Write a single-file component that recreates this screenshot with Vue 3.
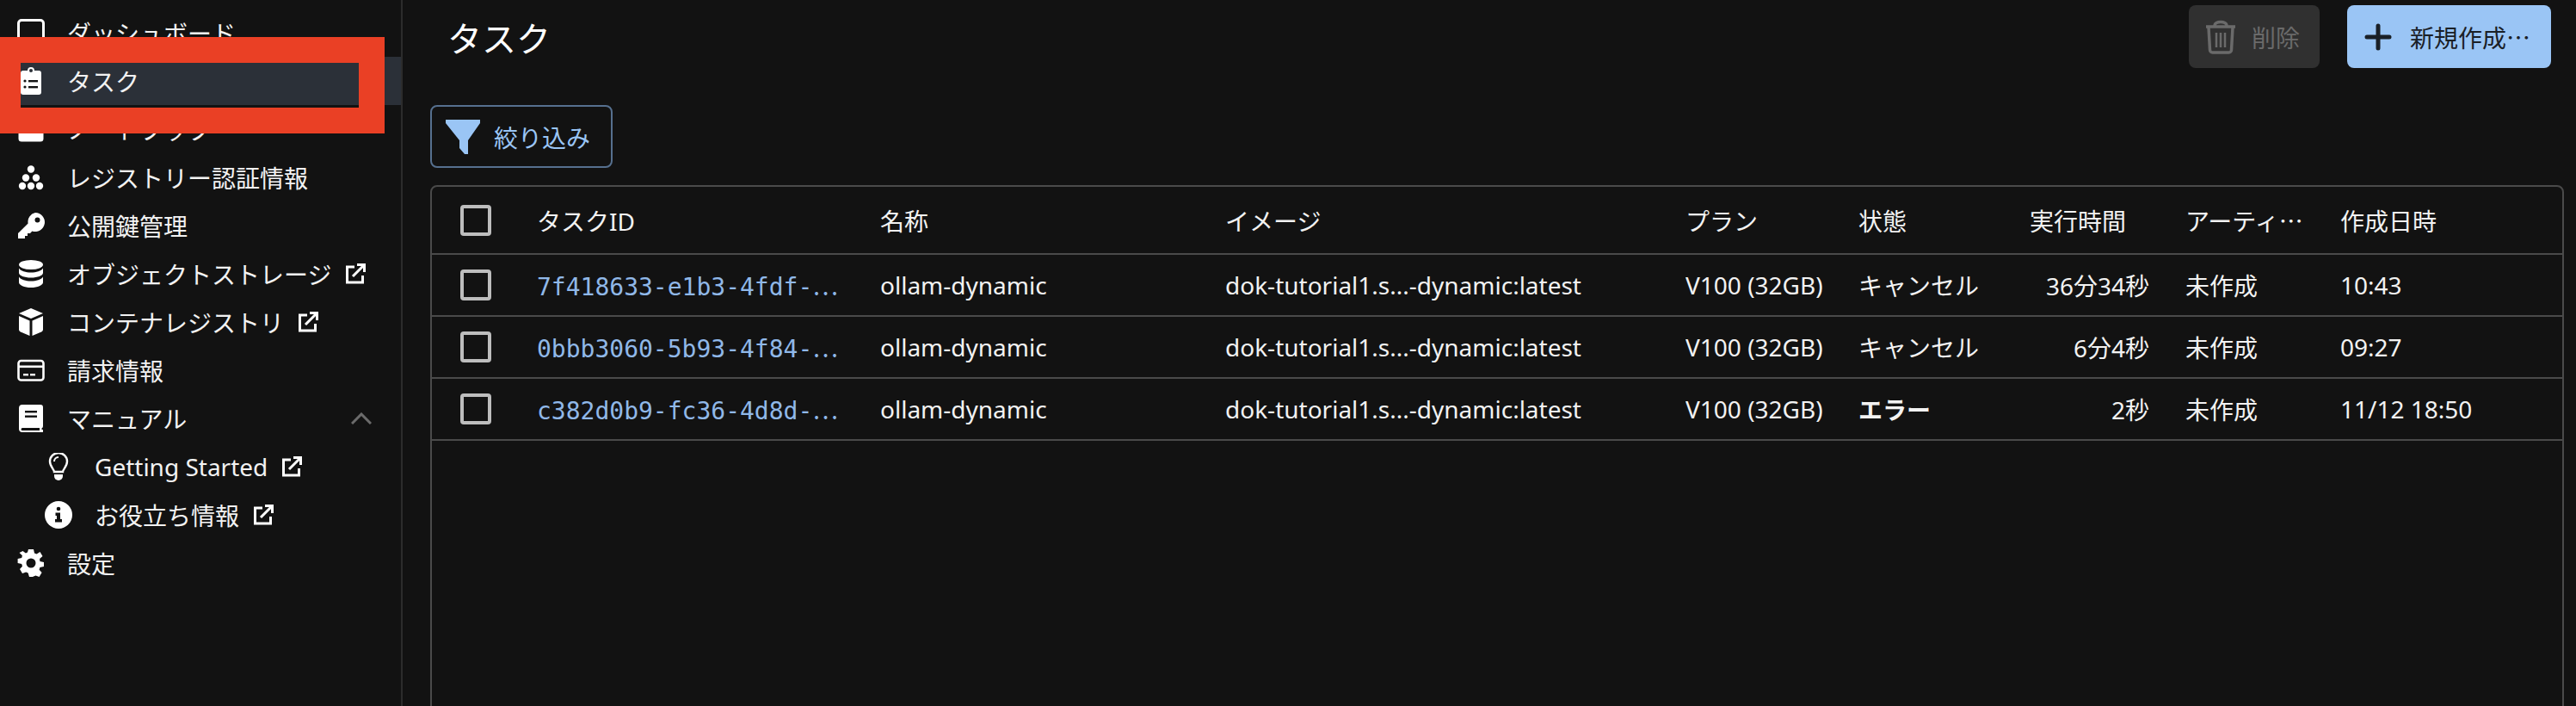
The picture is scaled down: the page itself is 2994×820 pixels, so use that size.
<script setup>
const nav = [
  { label: 'ダッシュボード', icon: 'dash' },
  { label: 'タスク', icon: 'task', active: true },
  { label: 'ノートブック', icon: 'note' },
  { label: 'レジストリー認証情報', icon: 'cubes' },
  { label: '公開鍵管理', icon: 'key' },
  { label: 'オブジェクトストレージ', icon: 'db', ext: true },
  { label: 'コンテナレジストリ', icon: 'cube', ext: true },
  { label: '請求情報', icon: 'card' },
  { label: 'マニュアル', icon: 'book', chevron: true },
  { label: 'Getting Started', icon: 'bulb', ext: true, sub: true },
  { label: 'お役立ち情報', icon: 'info', ext: true, sub: true },
  { label: '設定', icon: 'gear' },
]

const columns = ['タスクID', '名称', 'イメージ', 'プラン', '状態', '実行時間', 'アーティ', '作成日時']

const tasks = [
  { id: '7f418633-e1b3-4fdf-', status: 'キャンセル', time: '36分34秒', created: '10:43' },
  { id: '0bbb3060-5b93-4f84-', status: 'キャンセル', time: '6分4秒', created: '09:27' },
  { id: 'c382d0b9-fc36-4d8d-', status: 'エラー', time: '2秒', created: '11/12 18:50', error: true },
]
</script>

<template>
  <div class="page">
    <aside class="sidebar">
      <div
        v-for="item in nav"
        :key="item.label"
        class="nav-item"
        :class="{ active: item.active, sub: item.sub }"
      >
        <svg class="nav-icon" viewBox="0 0 32 32" fill="currentColor">
          <template v-if="item.icon === 'dash'">
            <rect x="1.5" y="1.5" width="29" height="29" rx="3.5" fill="none" stroke="currentColor" stroke-width="3" />
          </template>
          <template v-else-if="item.icon === 'task'">
            <path fill-rule="evenodd" d="M7 4h5a4 4 0 0 1 8 0h5a3 3 0 0 1 3 3v22a3 3 0 0 1-3 3H7a3 3 0 0 1-3-3V7a3 3 0 0 1 3-3zm9-2a2 2 0 1 0 0 4 2 2 0 0 0 0-4z" />
            <rect x="13" y="15" width="11" height="2.4" fill="#121212" />
            <rect x="13" y="22" width="11" height="2.4" fill="#121212" />
            <circle cx="9" cy="16" r="1.6" fill="#121212" />
            <circle cx="9" cy="23" r="1.6" fill="#121212" />
          </template>
          <template v-else-if="item.icon === 'note'">
            <rect x="1.5" y="1.5" width="29" height="29" rx="3.5" />
          </template>
          <template v-else-if="item.icon === 'cubes'">
            <circle cx="16" cy="6.5" r="4.2" />
            <circle cx="10" cy="16.5" r="4.2" />
            <circle cx="22" cy="16.5" r="4.2" />
            <circle cx="6" cy="26" r="4.2" />
            <circle cx="16" cy="26" r="4.2" />
            <circle cx="26" cy="26" r="4.2" />
          </template>
          <template v-else-if="item.icon === 'key'">
            <path fill-rule="evenodd" d="M21 1a11 11 0 1 1-3.6 21.4L15 25h-3v3H9v3H1v-6l11.6-11.6A11 11 0 0 1 21 1zm2.5 5.5a3 3 0 1 0 0 6 3 3 0 0 0 0-6z" />
          </template>
          <template v-else-if="item.icon === 'db'">
            <ellipse cx="16" cy="5.5" rx="14" ry="5.5" />
            <path d="M2 9.5C4 13 10 14.5 16 14.5S28 13 30 9.5V15c0 3-6.300 5.500-14 5.500S2 18 2 15z" />
            <path d="M2 19.500C4 23 10 24.500 16 24.500S28 23 30 19.500V26c0 3.300-6.300 6-14 6S2 29.300 2 26z" />
          </template>
          <template v-else-if="item.icon === 'cube'">
            <path d="M16 0l14 6-14 6L2 6z" />
            <path d="M2 9l12.500 5.500V32L4 27.500c-1.300-.6-2-1.500-2-3z" />
            <path d="M30 9l-12.500 5.500V32L28 27.500c1.300-.6 2-1.500 2-3z" />
          </template>
          <template v-else-if="item.icon === 'card'">
            <rect x="1.500" y="5" width="29" height="22.500" rx="3" fill="none" stroke="currentColor" stroke-width="2.600" />
            <rect x="2" y="10.500" width="28" height="2.600" />
            <rect x="7" y="20" width="6" height="2.400" />
            <rect x="15" y="20" width="6" height="2.400" />
          </template>
          <template v-else-if="item.icon === 'book'">
            <path fill-rule="evenodd" d="M6 0h21a3 3 0 0 1 3 3v22a3 3 0 0 1-1.500 2.600V29h1.500v3H6a4 4 0 0 1-4-4V4a4 4 0 0 1 4-4zm0 27a1.500 1.500 0 0 0 0 3h20v-3z" />
            <rect x="9" y="7" width="14" height="2.400" fill="#121212" />
            <rect x="9" y="12.500" width="14" height="2.400" fill="#121212" />
          </template>
          <template v-else-if="item.icon === 'bulb'">
            <path d="M11 22c0-3-5-6-5-12a10 10 0 0 1 20 0c0 6-5 9-5 12z" fill="none" stroke="currentColor" stroke-width="2.400" />
            <path d="M16 5a5 5 0 0 0-5 5" fill="none" stroke="currentColor" stroke-width="2" />
            <path d="M11 25h10v2a5 5 0 0 1-10 0z" />
          </template>
          <template v-else-if="item.icon === 'info'">
            <circle cx="16" cy="16" r="16" />
            <circle cx="16" cy="9" r="2.300" fill="#121212" />
            <path d="M12.500 13.500H18V21h2v3.500h-8V21h2v-4h-1.500z" fill="#121212" />
          </template>
          <template v-else-if="item.icon === 'gear'">
            <path fill-rule="evenodd" d="M13 0h6l1 4.500 2.600 1.100L26.500 3l3 5-3.400 3.100.3 2.900 4.600 1v5l-4.600 1-.8 2.700 3 3.300-3 5-4.200-1.600-2.400 1.200L18 32h-4l-1.400-4.400-2.400-1.200L6 28l-3-5 3-3.300L5.200 17l-4.600-1v-5l4.600-1 .7-2.700L2.500 4l4-2 3.400 2.500L12 3.500zM16 10.500a5.500 5.500 0 1 0 0 11 5.500 5.500 0 0 0 0-11z" />
          </template>
        </svg>
        <span class="nav-label">{{ item.label }}</span>
        <svg v-if="item.ext" class="ext-icon" viewBox="0 0 24 24" fill="none" stroke="currentColor" stroke-width="3">
          <path d="M11 4H2.500v18h18v-8" />
          <path d="M9 15L21 3" />
          <path d="M14 1.500h8.500V10" />
        </svg>
        <svg v-if="item.chevron" class="chevron" viewBox="0 0 24 14" fill="none" stroke="currentColor" stroke-width="3">
          <path d="M1 13L12 2l11 11" />
        </svg>
      </div>
    </aside>

    <main class="content">
      <header class="top-bar">
        <h1 class="title">タスク</h1>
        <div class="actions">
          <button class="btn btn-delete">
            <svg width="36" height="40" viewBox="0 0 36 40" fill="none" stroke="currentColor" stroke-width="3.500">
              <path d="M1 8h34" />
              <path d="M11 7c0-6 14-6 14 0" />
              <path d="M4 9l1.500 26a3 3 0 0 0 3 3h19a3 3 0 0 0 3-3L32 9" />
              <path d="M13 15v17M18 15v17M23 15v17" stroke-width="2.500" />
            </svg>
            <span>削除</span>
          </button>
          <button class="btn btn-create">
            <svg width="32" height="32" viewBox="0 0 32 32" fill="none" stroke="currentColor" stroke-width="5" stroke-linecap="round">
              <path d="M16 3v26M3 16h26" />
            </svg>
            <span>新規作成<span class="dots">…</span></span>
          </button>
        </div>
      </header>

      <button class="filter-btn">
        <svg width="40" height="40" viewBox="0 0 40 40" fill="currentColor">
          <path d="M0 0h40v4L26 24v16l-4 0-6-7V24L0 4z" />
        </svg>
        <span>絞り込み</span>
      </button>

      <div class="table">
        <div class="row head">
          <div class="cell"><span class="check"></span></div>
          <div v-for="col in columns" :key="col" class="cell" :class="{ right: false }">
            {{ col }}<span v-if="col === 'アーティ'" class="dots">…</span>
          </div>
        </div>
        <div v-for="task in tasks" :key="task.id" class="row body">
          <div class="cell"><span class="check"></span></div>
          <div class="cell task-id">{{ task.id }}<span class="dots">…</span></div>
          <div class="cell">ollam-dynamic</div>
          <div class="cell">dok-tutorial1.s...-dynamic:latest</div>
          <div class="cell">V100 (32GB)</div>
          <div class="cell" :class="{ error: task.error }">{{ task.status }}</div>
          <div class="cell time">{{ task.time }}</div>
          <div class="cell">未作成</div>
          <div class="cell">{{ task.created }}</div>
        </div>
      </div>
    </main>

    <div class="annotation"></div>
  </div>
</template>

<style scoped>
.page {
  position: relative;
  display: flex;
  width: 2994px;
  height: 820px;
  overflow: hidden;
  background: #121212;
  color: #f2f2f2;
  font-family: "Noto Sans", "Noto Sans CJK JP", sans-serif;
  font-size: 28px;
}

.sidebar {
  flex: 0 0 468px;
  box-sizing: border-box;
  padding-top: 10px;
  border-right: 2px solid #2c2c2c;
}

.nav-item {
  display: flex;
  align-items: center;
  height: 56px;
  padding-left: 20px;
  padding-right: 34px;
}

.nav-item.active {
  background: #2b3038;
}

.nav-item.sub {
  padding-left: 52px;
}

.nav-icon {
  flex: 0 0 32px;
  width: 32px;
  height: 32px;
  margin-right: 26px;
  color: #ffffff;
}

.ext-icon {
  width: 24px;
  height: 24px;
  margin-left: 16px;
  color: #ffffff;
}

.chevron {
  width: 24px;
  height: 14px;
  margin-left: auto;
  color: #6b6b6b;
}

.content {
  flex: 1;
  min-width: 0;
  box-sizing: border-box;
  padding: 6px 14px 0 32px;
}

.top-bar {
  display: flex;
  align-items: center;
  justify-content: space-between;
  height: 73px;
  padding: 0 15px 0 20px;
}

.title {
  margin: 0;
  font-size: 40px;
  font-weight: 400;
  color: #ffffff;
}

.actions {
  display: flex;
  gap: 32px;
}

.btn {
  display: flex;
  align-items: center;
  height: 73px;
  box-sizing: border-box;
  border: 0;
  border-radius: 8px;
  font: inherit;
}

.btn-delete {
  width: 152px;
  gap: 18px;
  padding-left: 19px;
  background: #303030;
  color: #6a6a6a;
}

.btn-create {
  width: 237px;
  gap: 21px;
  padding-left: 20px;
  background: #9ac5f5;
  color: #1a2027;
}

.dots {
  font-family: "Noto Sans CJK JP", sans-serif;
}

.filter-btn {
  display: flex;
  align-items: center;
  gap: 16px;
  width: 212px;
  height: 73px;
  margin-top: 43px;
  padding-left: 16px;
  box-sizing: border-box;
  border: 2px solid #56708f;
  border-radius: 8px;
  background: transparent;
  color: #9ac5f5;
  font: inherit;
}

.table {
  margin-top: 20px;
  height: 640px;
  border: 2px solid #4a4a4a;
  border-radius: 8px;
}

.row {
  display: grid;
  grid-template-columns: 122px 399px 401px 535px 201px 199px 181px 180px 258px;
  align-items: center;
  border-bottom: 2px solid #4a4a4a;
}

.row.head {
  height: 77px;
}

.row.body {
  height: 70px;
}

.cell {
  white-space: nowrap;
  overflow: hidden;
}

.cell:first-child {
  padding-left: 33px;
  display: flex;
}

.check {
  display: block;
  width: 36px;
  height: 36px;
  box-sizing: border-box;
  border: 4px solid #bdbdbd;
  border-radius: 4px;
}

.task-id {
  font-family: "DejaVu Sans Mono", "Liberation Mono", monospace;
  font-size: 28px;
  color: #90b8e8;
}

.time {
  padding-right: 42px;
  text-align: right;
}

.error {
  font-weight: 700;
}

.annotation {
  position: absolute;
  left: 0;
  top: 43px;
  width: 447px;
  height: 112px;
  box-sizing: border-box;
  border: solid #ea4025;
  border-width: 30px 30px 30px 24px;
}
</style>

<style>
html, body {
  background: #121212;
}
</style>
